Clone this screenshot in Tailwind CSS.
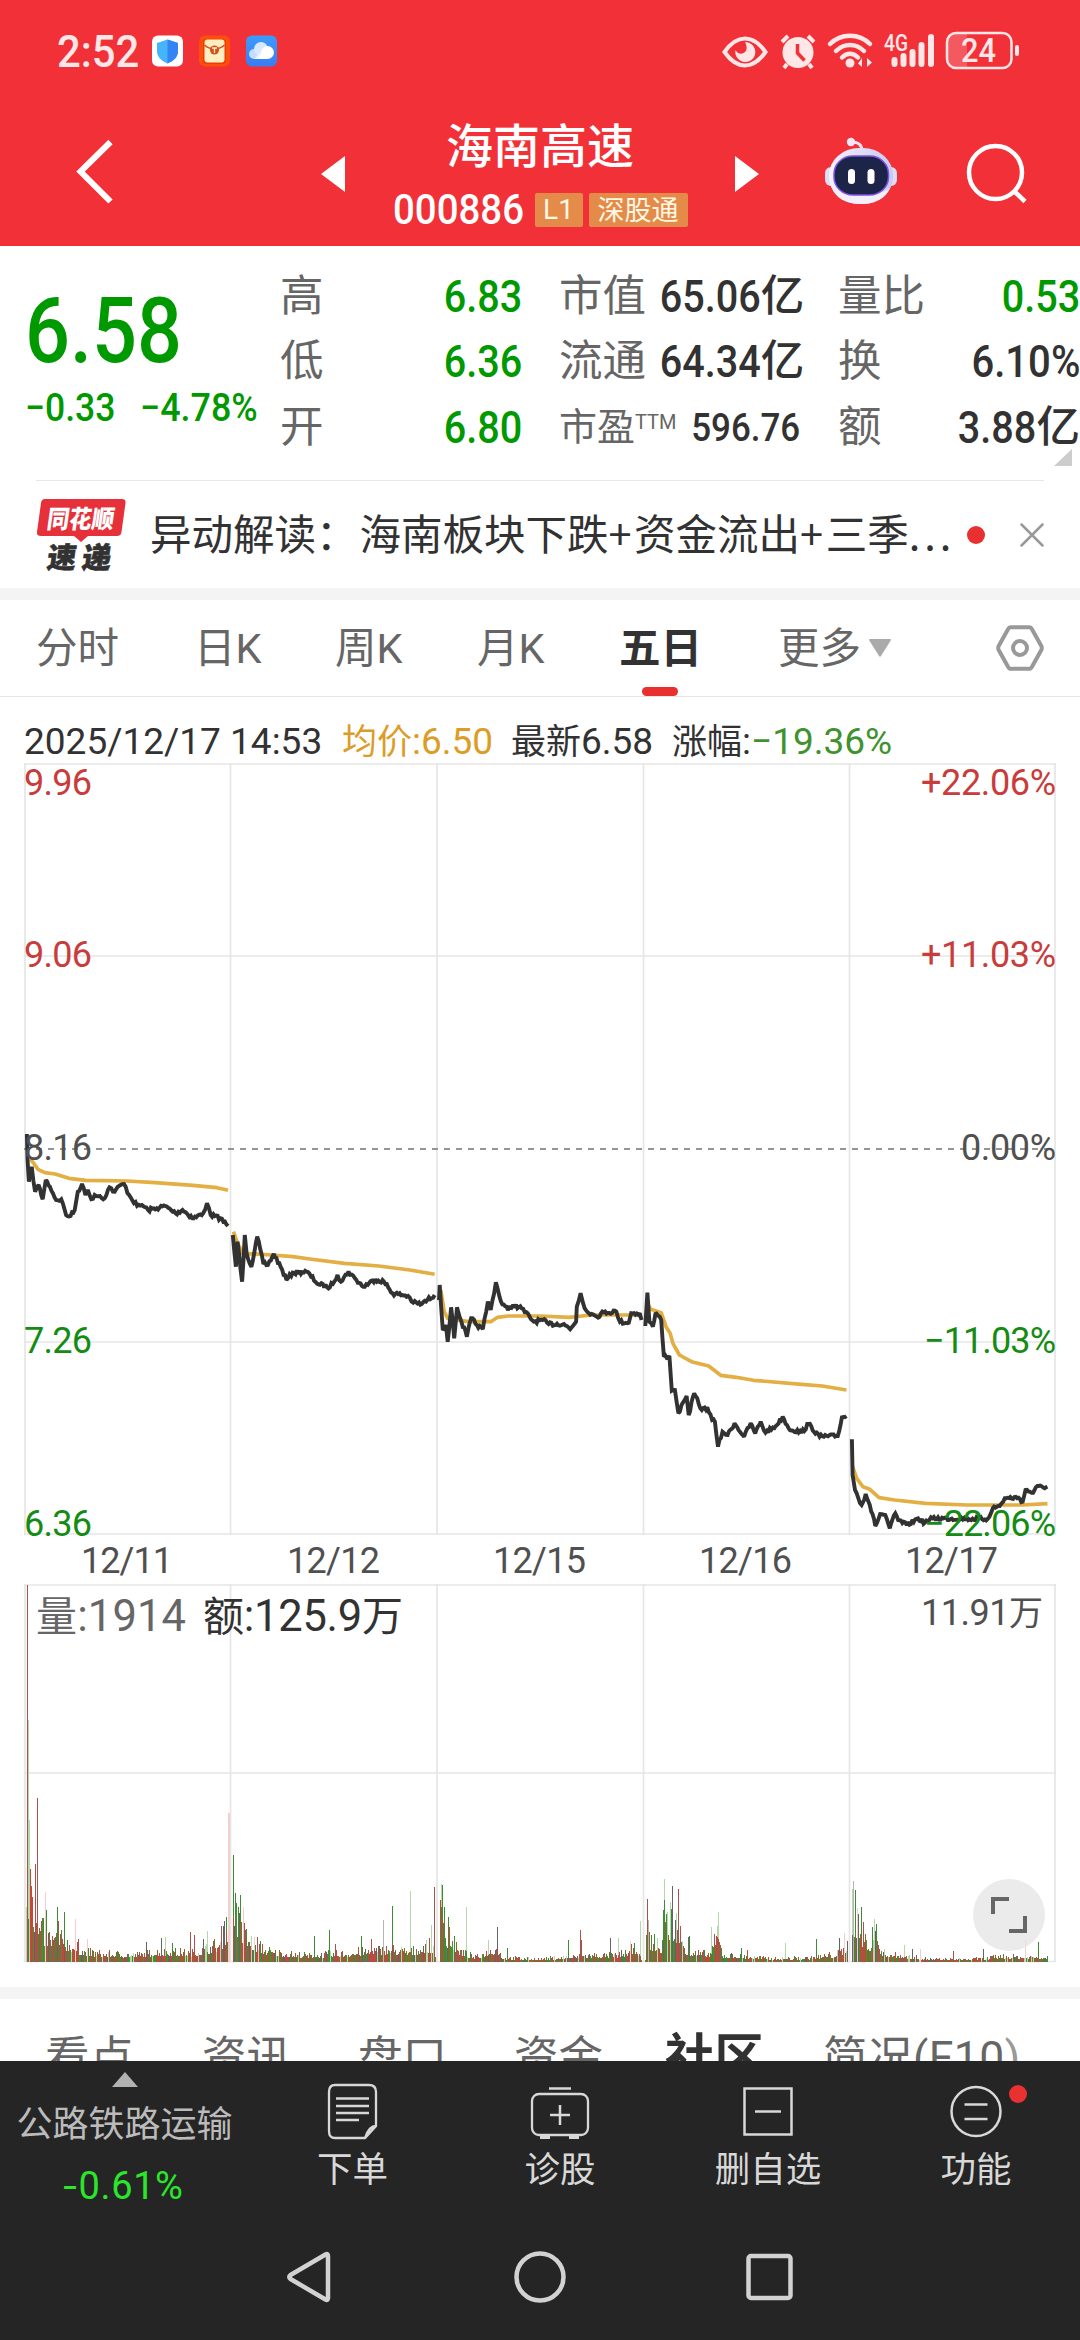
<!DOCTYPE html>
<html lang="zh-CN">
<head>
<meta charset="utf-8">
<title>海南高速 000886</title>
<script src="https://cdn.jsdelivr.net/npm/@tailwindcss/browser@4"></script>
</head>
<body class="w-[1080px] h-[2340px] overflow-hidden bg-white flex flex-col font-['Roboto','Noto_Sans_CJK_SC',sans-serif] text-[#323232]">

<header class="h-[246px] shrink-0 bg-[#f13038] flex flex-col">
  <!-- status bar -->
  <div class="h-[102px] flex items-center pl-[57px] text-[#ffe6e7]">
    <div class="w-[95px] text-[44px] leading-none whitespace-nowrap pt-[2px] font-medium"><span class="inline-block origin-left scale-x-[.95]">2:52</span></div>
    <svg class="w-[126px] h-[32px]" viewBox="0 0 126 32">
      <defs>
        <linearGradient id="cl" x1="0" y1="0" x2="0" y2="1"><stop offset="0" stop-color="#3c9bfb"/><stop offset="1" stop-color="#3a7df3"/></linearGradient>
      </defs>
      <rect width="31" height="31" y=".5" rx="6" fill="#fff"/>
      <path d="M15.500 4.500 26 8v8c0 6-4 9.500-10.500 12.500C9 25.500 5 22 5 16V8z" fill="#45b4fb"/>
      <path d="M15.500 4.500 26 8v8c0 6-4 9.500-10.500 12.500z" fill="#3484f5"/>
      <rect x="47" y=".5" width="31" height="31" rx="6" fill="#fd4f0b"/>
      <rect x="51" y="4" width="23" height="25" rx="4" fill="#ea3d05"/>
      <rect x="52.500" y="4.500" width="20" height="23" rx="3" fill="#ffeec2"/>
      <path d="M52.500 10c5 5 15 5 20 0" fill="none" stroke="#c9551d" stroke-width="1.500"/>
      <circle cx="62.500" cy="15" r="4.500" fill="#d2501b"/><path d="M60 13h5M62.500 13v5" stroke="#ffeec2" stroke-width="1.300"/>
      <rect x="94" y=".5" width="31" height="31" rx="6" fill="url(#cl)"/>
      <circle cx="102" cy="19" r="5" fill="#c3dcff"/><circle cx="109" cy="14" r="7" fill="#d7e8ff"/><path d="M102 24l9-9 4 9z" fill="#eaf3ff"/><circle cx="115.500" cy="17.500" r="6.500" fill="#fff"/><path d="M106 24c2-4 4-6 7-8l3 8z" fill="#fff"/>
    </svg>
    <svg class="ml-[443px] w-[300px] h-[40px]" viewBox="720 31 300 40" fill="none" stroke="#ffe6e7">
      <path d="M723.500 52C736 34 752 34 764.500 52 752 70 736 70 723.500 52z" stroke-width="4"/>
      <path d="M744 42a10 10 0 1 1-9.500 8c2 5 10 5 11-1 .5-3-.5-5-1.500-7z" fill="#ffe6e7" stroke="none"/>
      <circle cx="797" cy="52.500" r="15.500" fill="#ffe6e7" stroke="none"/>
      <path d="M781 42l6-6M813 42l-6-6M786 64l-3 4M808 64l3 4" stroke-width="4" stroke-linecap="butt"/>
      <path d="M796.500 44v9l7 7.500" stroke="#f13038" stroke-width="3.500"/>
      <path d="M829 44c11-11 29-11 40 0M835 51c8-8 20-8 28 0M841 57.500c5-5 11-5 16 0" stroke-width="4.500" stroke-linecap="round"/>
      <circle cx="849" cy="63" r="4.500" fill="#ffe6e7" stroke="none"/>
      <path d="M861 58v9l-4-3.500zM866 67v-9l5 4.500z" fill="#ffe6e7" stroke="none"/>
      <g stroke-width="6" stroke-linecap="round"><path d="M893.500 60v4M902.500 56v8M911.500 52v12M920.500 45v19M930 37v27"/></g>
      <rect x="946" y="33" width="64.500" height="35" rx="9" stroke-width="2.500"/>
      <path d="M966 34h-11q-8 0-8 8v17q0 8 8 8h11z" fill="#fff" fill-opacity=".2" stroke="none"/>
      <path d="M1016 47v7" stroke-width="4" stroke-linecap="round"/>
      <g fill="#ffe6e7" stroke="none" font-family="Roboto" font-weight="500">
        <text x="883" y="51" font-size="23" textLength="24" lengthAdjust="spacingAndGlyphs">4G</text>
        <text x="960" y="62" font-size="33" textLength="35" lengthAdjust="spacingAndGlyphs">24</text>
      </g>
    </svg>
  </div>
  <!-- title bar -->
  <div class="h-[144px] flex items-start">
    <svg class="ml-[70px] mt-[30px] w-[50px] h-[80px]" viewBox="70 132 50 80" fill="none" stroke="#fff" stroke-width="6"><path d="M110.500 142 80.500 171.500 110.500 201.500"/></svg>
    <svg class="ml-[201px] mt-[54px] w-[24px] h-[36px]" viewBox="0 0 24 36" fill="#fff"><path d="M0 18 24 0v36z"/></svg>
    <div class="w-[390px] flex flex-col items-center text-white">
      <div class="mt-[10px] h-[62px] leading-[62px] text-[47px] font-medium font-['Noto_Sans_CJK_SC'] whitespace-nowrap">海南高速</div>
      <div class="mt-[19px] w-[295px] h-[34px] flex items-center">
        <div class="w-[142px] shrink-0 text-[42px] font-medium leading-[34px]"><span class="inline-block origin-left scale-x-[.915]">000886</span></div>
        <div class="w-[48px] h-[34px] shrink-0 rounded-[2px] bg-[#e58b4a] text-[#fff8e4] text-[28px] leading-[34px] text-center">L1</div>
        <div class="ml-[6px] w-[99px] h-[34px] shrink-0 rounded-[2px] bg-[#e58b4a] text-[#fff8e4] text-[27px] leading-[31px] text-center font-['Noto_Sans_CJK_SC']">深股通</div>
      </div>
    </div>
    <svg class="mt-[54px] w-[24px] h-[36px]" viewBox="0 0 24 36" fill="#fff"><path d="M24 18 0 0v36z"/></svg>
    <svg class="ml-[61px] mt-[32px] w-[82px] h-[76px]" viewBox="820 134 82 76">
      <defs><linearGradient id="hd" x1="0" x2="1"><stop offset="0" stop-color="#f6f3fb"/><stop offset="1" stop-color="#c9c9f2"/></linearGradient></defs>
      <path d="M851 142c8 0 11 3 11 9" fill="none" stroke="#f0e3f3" stroke-width="3"/>
      <circle cx="851" cy="142" r="4.200" fill="#f3e6f6"/>
      <rect x="825" y="167" width="72" height="19" rx="6" fill="#dfdcf6"/>
      <rect x="829" y="148" width="64" height="56" rx="30" ry="27" fill="url(#hd)"/>
      <path d="M861 204c-16 0-26-7-29-16 8 8 50 8 58 0-4 10-14 16-29 16z" fill="#f3effb"/>
      <rect x="834" y="156" width="54.500" height="39" rx="19" ry="18" fill="#1c2548" stroke="#7d52e8" stroke-width="1.500"/>
      <rect x="848" y="169" width="7" height="15" rx="3.500" fill="#fff"/><rect x="867.500" y="169" width="7" height="15" rx="3.500" fill="#fff"/>
    </svg>
    <svg class="ml-[59px] mt-[36px] w-[72px] h-[72px]" viewBox="960 138 72 72" fill="none" stroke="#fff" stroke-width="4.500"><circle cx="994.500" cy="172.500" r="26.500"/><path d="M1013 191l11 10.500"/></svg>
  </div>
</header>

<!-- quote -->
<section class="relative h-[234px] shrink-0 flex">
  <div class="w-[280px] pl-[25px] text-[#009900] whitespace-nowrap">
    <div class="mt-[41px] h-[90px] leading-[90px] text-[90px] font-medium"><span class="inline-block origin-left scale-x-[.88]">6.58</span></div>
    <div class="mt-[11px] h-[40px] leading-[40px] text-[39px] font-medium flex">
      <div class="w-[115px]"><span class="inline-block origin-left scale-x-[.91]">−0.33</span></div>
      <div><span class="inline-block origin-left scale-x-[.92]">−4.78%</span></div>
    </div>
  </div>
  <div class="mt-[18px] grid grid-cols-[242px_37px_241px_38px_242px] grid-rows-3 h-[196px] text-[43.500px] leading-[65px] whitespace-nowrap">
    <div class="flex justify-between text-[#666]"><span>高</span><span class="inline-block origin-right scale-x-[.88] font-medium text-[45px] text-[#009900]">6.83</span></div><i></i>
    <div class="flex justify-between text-[#666]"><span>市值</span><span class="flex font-medium text-[#323232]"><span class="inline-block origin-right scale-x-[.88] text-[45px]">65.06</span>亿</span></div><i></i>
    <div class="flex justify-between text-[#666]"><span>量比</span><span class="inline-block origin-right scale-x-[.88] font-medium text-[45px] text-[#009900]">0.53</span></div>
    <div class="flex justify-between text-[#666]"><span>低</span><span class="inline-block origin-right scale-x-[.88] font-medium text-[45px] text-[#009900]">6.36</span></div><i></i>
    <div class="flex justify-between text-[#666]"><span>流通</span><span class="flex font-medium text-[#323232]"><span class="inline-block origin-right scale-x-[.88] text-[45px]">64.34</span>亿</span></div><i></i>
    <div class="flex justify-between text-[#666]"><span>换</span><span class="inline-block origin-right scale-x-[.89] font-medium text-[45px] text-[#323232]">6.10%</span></div>
    <div class="flex justify-between text-[#666]"><span>开</span><span class="inline-block origin-right scale-x-[.88] font-medium text-[45px] text-[#009900]">6.80</span></div><i></i>
    <div class="flex justify-between text-[#666]"><span class="text-[38px]">市盈<span class="inline-block align-[11px] leading-none text-[20px]">TTM</span></span><span class="inline-block origin-right scale-x-[.885] text-[39.500px] font-medium text-[#323232]">596.76</span></div><i></i>
    <div class="flex justify-between text-[#666]"><span>额</span><span class="flex font-medium text-[#323232]"><span class="inline-block origin-right scale-x-[.88] text-[45px]">3.88</span>亿</span></div>
  </div>
  <svg class="absolute right-[8px] top-[203px] w-[18px] h-[17px]" viewBox="0 0 18 17" fill="#ccc"><path d="M18 0v17H0z"/></svg>
</section>

<!-- news strip -->
<section class="h-[108px] shrink-0 mx-[36px] border-t border-[#e8e8e8] flex items-center">
  <svg class="w-[90px] h-[76px] shrink-0" viewBox="36 496 90 76" font-family="Noto Sans CJK SC" font-weight="900">
    <path d="M45 498h77q4 0 3.500 4l-4 29q-.5 4-4.500 4H88l-7 6-7-6H41q-4.500 0-4-4l4-29q.5-4 4-4z" fill="#e6313a"/>
    <text transform="translate(46 527) skewX(-8)" font-size="25" fill="#fff" textLength="67" lengthAdjust="spacingAndGlyphs">同花顺</text>
    <text transform="translate(46 567) skewX(-8)" font-size="29" fill="#323232" stroke="#323232" stroke-width=".6" textLength="64">速递</text>
  </svg>
  <div class="ml-[24px] w-[805px] shrink-0 text-[41.500px] leading-[60px] whitespace-nowrap overflow-hidden font-['Noto_Sans_CJK_SC'] pb-[5px]">异动解读：<span class="pl-[2px]">海南板块下跌</span><span class="tracking-[2.500px]">+</span>资金流出<span class="tracking-[2.500px]">+</span>三季<span class="tracking-[4px]">...</span></div>
  <div class="ml-[12px] w-[18px] h-[18px] shrink-0 rounded-full bg-[#e93030]"></div>
  <svg class="ml-[35px] w-[24px] h-[24px] shrink-0" viewBox="0 0 24 24" stroke="#999" stroke-width="2.500" stroke-linecap="round"><path d="M1.500 1.500 22.500 22.500M22.500 1.500 1.500 22.500"/></svg>
</section>
<div class="h-[12px] shrink-0 bg-[#f4f4f4]"></div>

<!-- period tabs -->
<nav class="h-[97px] shrink-0 border-b border-[#e4e4e4] flex text-[41.500px] leading-[97px] text-[#666] whitespace-nowrap">
  <div class="ml-[36px] w-[158px]">分时</div>
  <div class="w-[141px]">日K</div>
  <div class="w-[142px]">周K</div>
  <div class="w-[142px]">月K</div>
  <div class="relative w-[159px] font-bold text-[#323232]">五日<span class="absolute left-[23px] bottom-0 w-[36px] h-[9px] rounded-full bg-[#e93030]"></span></div>
  <div class="w-[91px]">更多</div>
  <svg class="mt-[39px] w-[22px] h-[18px]" viewBox="0 0 22 18" fill="#aaa"><path d="M1 0h20q1.500 0 .7 1.500L12 17q-1 1.500-2 0L.3 1.500Q-.5 0 1 0z"/></svg>
  <svg class="ml-[105px] mt-[25px] w-[48px] h-[46px]" viewBox="0 0 48 46" fill="none" stroke="#999" stroke-width="4"><path d="M15 2.200h18q2 0 3 2l9.300 16.800q1 2 0 4L36 41.800q-1 2-3 2H15q-2 0-3-2L2.700 25q-1-2 0-4L12 4.200q1-2 3-2z"/><circle cx="24" cy="23" r="7"/></svg>
</nav>

<!-- readout -->
<div class="h-[66px] shrink-0 pl-[24px] flex items-start pt-[20px] text-[37px] leading-[50px] whitespace-nowrap">
  <div class="w-[318px]">2025/12/17 14:53</div>
  <div class="w-[169px] text-[#dc9d28]"><span class="text-[35px]">均价</span>:6.50</div>
  <div class="w-[161px]"><span class="text-[35px]">最新</span>6.58</div>
  <div><span class="text-[35px]">涨幅</span>:<span class="text-[#40922f]">−19.36%</span></div>
</div>

<!-- price and volume charts -->
<section class="relative h-[1224px] shrink-0">
  <svg id="chart" class="block w-[1080px] h-[1224px]" viewBox="0 763 1080 1224">
    <g stroke="#e6e6e6" stroke-width="1.700" fill="none">
      <path d="M24 764H1056M24 956H1056M24 1342H1056M24 1534H1056M24 1585H1056M24 1773H1056M24 1961.500H1056"/>
      <path d="M25 763V1535M230.500 763V1535M437 763V1535M643.500 763V1535M849.500 763V1535M1055 763V1535M25 1584V1962M230.500 1584V1962M437 1584V1962M643.500 1584V1962M849.500 1584V1962M1055 1584V1962"/>
      <path d="M24 1149H1056" stroke="#949494" stroke-width="2" stroke-dasharray="6 6"/>
    </g>
    <g id="lines" fill="none" stroke-linejoin="round"></g>
    <g id="bars" shape-rendering="crispEdges"></g>
    <g font-family="Roboto" font-size="36">
      <g fill="#c83c3c"><text x="24" y="795" textLength="68">9.96</text><text x="24" y="967" textLength="68">9.06</text></g>
      <g fill="#505050"><text x="24" y="1160" textLength="68">8.16</text></g>
      <g fill="#148c14"><text x="24" y="1353" textLength="68">7.26</text><text x="24" y="1536" textLength="68">6.36</text></g>
      <g fill="#c83c3c"><text x="921" y="795" textLength="135">+22.06%</text><text x="921" y="967" textLength="135">+11.03%</text></g>
      <text x="961" y="1160" textLength="95" fill="#505050">0.00%</text>
      <g fill="#148c14"><text x="924" y="1353" textLength="132">−11.03%</text><text x="924" y="1536" textLength="132">−22.06%</text></g>
      <g fill="#505050"><text x="81" y="1573" textLength="92">12/11</text><text x="287" y="1573" textLength="93">12/12</text><text x="493" y="1573" textLength="93">12/15</text><text x="699" y="1573" textLength="93">12/16</text><text x="905" y="1573" textLength="93">12/17</text></g>
    </g>
    <g font-family="Roboto, 'Noto Sans CJK SC', sans-serif">
      <g font-size="43.500"><text x="36" y="1631" textLength="150" fill="#666"><tspan font-size="41">量</tspan>:1914</text><text x="203" y="1631" textLength="200" fill="#323232"><tspan font-size="41">额</tspan>:125.9<tspan font-size="41">万</tspan></text></g>
      <text x="921" y="1625" font-size="36" textLength="122" fill="#505050">11.91<tspan font-size="34">万</tspan></text>
    </g>
  </svg>
  <div class="absolute left-[973px] top-[1116px] w-[72px] h-[72px] rounded-full bg-[#e4e4e4]/75 flex items-center justify-center">
    <svg class="w-[38px] h-[38px]" viewBox="0 0 38 38" fill="none" stroke="#666" stroke-width="4"><path d="M3 18V3h16M35 20v15H19"/></svg>
  </div>
</section>
<div class="h-[12px] shrink-0 bg-[#f4f4f4]"></div>

<!-- content tabs, partly covered by the toolbar -->
<nav class="h-[62px] shrink-0 overflow-hidden flex text-[44.500px] leading-[60px] pt-[29px] pl-[45px] text-[#666] whitespace-nowrap">
  <div class="w-[157px]">看点</div><div class="w-[156px]">资讯</div><div class="w-[156px]">盘口</div><div class="w-[151px]">资金</div>
  <div class="w-[158px] text-[49.500px] font-bold text-[#323232]">社区</div>
  <div class="tracking-[.5px]">简况(F10<span class="text-[#999]">)</span></div>
</nav>

<!-- toolbar -->
<footer class="h-[279px] shrink-0 bg-[#252525] text-[#d8d8d8] flex flex-col">
  <div class="h-[154px] flex font-['Noto_Sans_CJK_SC'] text-[35.500px] leading-[44px] whitespace-nowrap">
    <div class="w-[249px] pt-[11px] flex flex-col items-center text-[#bbb]">
      <svg class="w-[26px] h-[15px]" viewBox="0 0 26 15" fill="#b2b2b2"><path d="M13 0l13 15H0z"/></svg>
      <div class="mt-[12px] h-[44px] text-[36px]">公路铁路运输</div>
      <div class="mt-[21px] h-[44px] font-['Roboto'] text-[38px] tracking-[.6px] text-[#2be62b]"><span class="inline-block scale-x-[1.3]">-</span><span class="pl-[2px]">0.61%</span></div>
    </div>
    <div class="w-[207px] flex flex-col items-center">
      <svg class="mt-[22px] w-[52px] h-[58px]" viewBox="0 0 52 58" fill="none" stroke="#d8d8d8" stroke-width="2.300"><path d="M8 2h34q7 0 7 7v34L38 55H8q-6 0-6-7V9q0-7 6-7zM49 43q-7 0-11 12M9 15.500h33M9 23h33M9 30h33M9 37h23"/></svg>
      <div class="mt-[4px]">下单</div>
    </div>
    <div class="w-[208px] flex flex-col items-center">
      <svg class="mt-[22px] w-[60px] h-[58px]" viewBox="0 0 60 58" fill="none" stroke="#d8d8d8" stroke-width="2.300"><rect x="2" y="11" width="56" height="41" rx="7"/><path d="M19 5.500h22M30 22v20M20 32h20" stroke-width="2.500"/><path d="M10 54.500h10M39 54.500h10" stroke-width="3"/></svg>
      <div class="mt-[4px]">诊股</div>
    </div>
    <div class="w-[208px] flex flex-col items-center">
      <svg class="mt-[22px] w-[52px] h-[58px]" viewBox="0 0 52 58" fill="none" stroke="#d8d8d8" stroke-width="2.500"><rect x="2.500" y="5.500" width="47" height="46"/><path d="M13 28.500h26"/></svg>
      <div class="mt-[4px]">删自选</div>
    </div>
    <div class="relative w-[208px] flex flex-col items-center">
      <svg class="mt-[22px] w-[54px] h-[58px]" viewBox="0 0 54 58" fill="none" stroke="#d8d8d8" stroke-width="2.500"><circle cx="27" cy="28.500" r="24.500"/><path d="M15.500 21.500h23M15.500 36h23"/></svg>
      <div class="mt-[4px]">功能</div>
      <span class="absolute left-[137px] top-[24px] w-[18px] h-[18px] rounded-full bg-[#ea3131]"></span>
    </div>
  </div>
  <div class="h-[125px] flex pl-[284px] pt-[33px]">
    <svg class="w-[512px] h-[58px]" viewBox="284 2248 512 58" fill="none" stroke="#d2d2d2" stroke-width="4.500" stroke-linejoin="round"><path d="M325.500 2254.500Q328 2253 328 2256V2298Q328 2301 325.500 2299.500L290.500 2279Q288 2277 290.500 2275z"/><circle cx="540" cy="2277" r="23.500"/><rect x="748.500" y="2256" width="42" height="42" rx="2.500"/></svg>
  </div>
</footer>

<script>
let seed = 7;
const rnd = () => (seed = (seed * 16807) % 2147483647) / 2147483647;
const KX = 1 / 2.904, NS = 'http://www.w3.org/2000/svg';
const add = (id, attrs) => { const e = document.createElementNS(NS, 'path'); for (const k in attrs) e.setAttribute(k, attrs[k]); document.getElementById(id).appendChild(e); };
const pts = s => s.split(' ').map(p => p.split(',').map(Number));
// Samples are stored in chart units: x at 2.904 per pixel, y at 3 per pixel.
function line(s, off, noise) {
  const a = pts(s), out = [];
  a.forEach((p, i) => {
    out.push(p);
    const q = a[i + 1];
    if (!q || !noise) return;
    const n = Math.floor((q[0] - p[0]) / 4);
    for (let k = 1; k < n; k++) { const t = k / n; out.push([p[0] + (q[0] - p[0]) * t, p[1] + (q[1] - p[1]) * t + (rnd() - .5) * noise]); }
  });
  return 'M' + out.map(p => ((p[0] + off) * KX).toFixed(1) + ' ' + (1120 + p[1] / 3).toFixed(1)).join('L');
}
const avg = [
 ['88,118 98,130 110,148 130,158 160,162 200,175 250,181 370,183 450,188 560,196 630,203 662,211', 0],
 ['678,335 690,370 705,400 790,405 850,410 900,417 1000,430 1100,438 1190,450 1262,463', 0],
 ['1280,510 1290,575 1300,595 1360,605 1425,605 1445,592 1475,588 1568,588 1653,592 1718,585 1863,585', 0],
 ['312,550 322,568 352,578 366,620 378,640 386,670 405,705 440,725 490,738 525,766 570,772 620,781 760,793 820,798 890,810', 1568],
 ['908,1040 920,1075 938,1100 958,1108 985,1133 1030,1140 1120,1150 1240,1155 1400,1155 1474,1151', 1568]];
const price = [
 ['78,42 80,118 84,185 92,140 102,215 112,195 124,238 133,180 145,200 163,240 178,238 192,285 205,288 217,270 226,215 238,192 248,225 255,210 265,238 275,225 290,228 300,238 318,202 333,215 350,195 360,192 375,225 398,258 412,255 430,270 455,265 480,258 510,280 530,270 562,295 590,280 601,250 612,285 640,295 662,318', 0],
 ['676,345 685,440 690,365 703,485 711,345 716,400 730,440 747,350 765,432 778,435 795,402 815,440 832,480 850,458 890,455 925,493 958,502 980,465 990,485 1012,455 1035,480 1055,500 1090,478 1115,485 1140,520 1185,528 1200,548 1225,552 1262,525', 0],
 ['1275,540 1277,495 1286,630 1295,615 1300,665 1310,562 1319,655 1327,562 1340,605 1356,650 1368,595 1385,615 1402,628 1417,545 1425,570 1440,487 1455,545 1475,570 1490,555 1515,565 1550,605 1576,600 1593,612 1638,612 1656,628 1673,605 1675,560 1686,520 1698,565 1718,582 1733,590 1753,577 1790,575 1800,605 1826,608 1833,580 1858,580 1863,600', 0],
 ['306,618 312,518 318,605 328,620 336,578 352,600 360,710 376,708 383,812 392,810 402,880 420,840 426,828 432,885 448,820 470,870 486,862 500,900 508,905 517,980 530,935 545,945 565,910 593,950 612,910 625,940 641,905 655,938 685,918 705,890 722,925 760,938 780,912 812,950 865,948 877,892 890,888', 1568],
 ['906,958 908,1065 915,1110 934,1155 946,1122 958,1155 974,1218 988,1182 1003,1185 1016,1225 1032,1180 1040,1200 1065,1215 1098,1195 1118,1208 1140,1195 1300,1197 1315,1165 1335,1158 1350,1135 1390,1133 1402,1145 1410,1110 1432,1118 1440,1102 1474,1100', 1568]];
avg.forEach(([s, o]) => add('lines', { d: line(s, o, 0), stroke: '#e3ae42', 'stroke-width': 3.7 }));
price.forEach(([s, o]) => add('lines', { d: line(s, o, 12), stroke: '#323232', 'stroke-width': 3.9, 'stroke-linejoin': 'miter', 'stroke-miterlimit': 2 }));

// Volume: an envelope per stretch of the session, then the notable spikes.
const env = pts('76,330 90,270 110,150 135,110 165,100 200,80 240,45 300,35 400,32 460,45 560,40 640,80 658,140 665,0 676,0 677,240 700,130 740,75 790,42 900,28 1000,38 1130,55 1190,45 1240,70 1262,60 1265,0 1275,0 1276,200 1300,100 1330,50 1380,20 1440,60 1460,18 1568,14 1660,22 1700,30 1790,28 1850,60 1862,0 1873,0 1874,100 1920,60 1930,170 1970,140 1995,40 2060,35 2082,110 2100,30 2160,25 2250,15 2350,18 2430,35 2455,60 2460,0 2473,0 2474,200 2500,110 2530,70 2545,110 2560,40 2600,30 2650,22 2700,12 2860,14 2900,25 3042,22');
const height = x => { for (let i = 1; i < env.length; i++) if (x <= env[i][0]) { const [a, b] = [env[i - 1], env[i]]; return a[1] + (b[1] - a[1]) * (x - a[0]) / (b[0] - a[0]); } return 0; };
const colors = { r: '#a8524c', R: '#c9443a', g: '#3f8a35', G: '#43932f', k: '#646464', p: '#f0cfcd', l: '#b4d8ab', b: '#8c6430', s: '#b5b5b5' };
const paths = {};
const bar = (x, h, c, w = 1) => { const px = Math.round(x * KX), y = Math.round(1962 - h / 3); paths[c] = (paths[c] || '') + `M${px} ${y}h${w}V1962h-${w}z`; };
for (let px = 26; px < 1048; px++) {
  const x = px / KX, e = height(x);
  if (e <= 0) continue;
  const r = rnd(), c = 'gbkGlRrRbbgr'[Math.floor(rnd() * 12)];
  bar(x, Math.max(5, e * (.4 + .65 * r * r)), c);
}
'77,532,b 79,1132,r 82,727,l 85,425,l 88,280,R 91,227,R 94,195,R 102,295,r 106,272,b 108,493,r 132,210,p 135,157,g 166,166,g 169,123,r 187,150,g 219,128,p 227,68,r 252,68,p 425,60,k 468,73,k 478,76,l 500,58,g 553,89,r 564,80,r 590,68,k 602,92,l 643,108,r 651,122,k 655,136,g 661,446,p 678,320,g 681,208,g 684,177,G 698,201,g 706,164,p 710,118,r 737,76,p 747,74,r 913,77,g 956,96,g 974,54,r 1047,79,g 1078,70,r 1113,125,s 1139,168,g 1190,212,l 1251,110,l 1261,226,r 1280,233,l 1284,231,g 1288,165,g 1300,135,g 1305,105,R 1318,78,g 1354,164,l 1418,65,l 1444,104,k 1473,43,g 1650,67,g 1685,95,r 1688,67,r 1772,73,k 1794,73,l 1830,64,p 1859,122,l 1880,190,r 1883,125,s 1891,82,g 1898,85,g 1924,155,g 1927,186,g 1929,248,l 1935,145,g 1946,179,l 1949,158,g 1952,227,k 1959,125,g 1964,146,l 1970,218,r 1976,72,l 1997,76,g 2002,78,k 2066,104,l 2082,108,l 2085,149,l 2089,60,r 2153,43,g 2170,36,r 2280,56,l 2370,68,g 2437,73,k 2451,88,p 2461,62,k 2475,218,l 2478,243,s 2484,215,g 2490,163,p 2501,164,g 2507,120,r 2533,105,g 2539,130,l 2543,113,g 2547,62,r 2626,50,l 2649,40,k 2672,40,p 2768,32,r 2855,38,k 2977,65,p 3015,59,g'
  .split(' ').forEach(t => { const [x, h, c] = t.split(','); bar(+x, +h, c, c === 'p' && +h > 400 ? 2 : 1); });
for (const c in paths) add('bars', { d: paths[c], fill: colors[c] });
</script>
</body>
</html>
